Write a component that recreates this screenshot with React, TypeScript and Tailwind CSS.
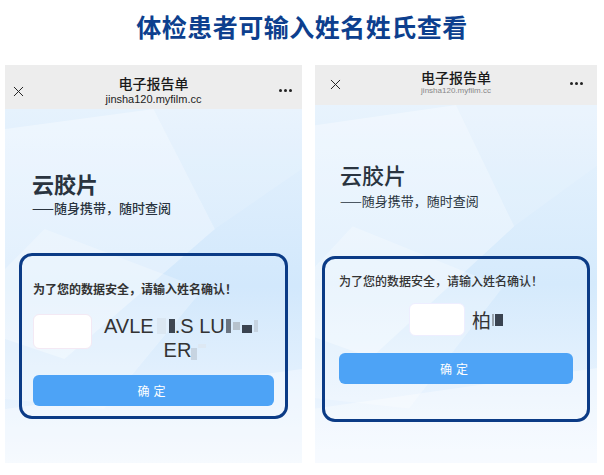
import { X } from "lucide-react";

const font = { fontFamily: '"Noto Sans CJK SC", "Noto Sans", sans-serif' };

function Decor() {
  return (
    <svg className="absolute inset-0 h-full w-full" viewBox="0 0 300 354" preserveAspectRatio="none">
      <polygon points="0,20 150,0 212,120 60,250 0,230" fill="#ffffff" fillOpacity="0.35" />
      <polygon points="0,160 40,120 200,180 100,300 0,290" fill="#ffffff" fillOpacity="0.25" />
      <polygon points="150,0 300,0 300,60 212,120" fill="#ffffff" fillOpacity="0.12" />
      <polygon points="0,354 0,300 300,260 300,354" fill="#ffffff" fillOpacity="0.35" />
    </svg>
  );
}

function Header({ big }: { big: boolean }) {
  return (
    <div
      className={
        "relative flex shrink-0 flex-col items-center justify-center bg-[#ededed] " +
        (big ? "h-[44px]" : "h-[40px]")
      }
    >
      <X
        className={"absolute text-[#222] " + (big ? "left-[5px] top-[18px]" : "left-[12px] top-[11px]")}
        size={17}
        strokeWidth={1.4}
      />
      <div className={"text-[14px] font-medium leading-[18px] text-[#1a1a1a] " + (big ? "mt-[6px]" : "mt-[-6px]")}>
        电子报告单
      </div>
      <div
        className={
          big ? "text-[11px] leading-[14px] text-[#222]" : "text-[8px] leading-[10px] text-[#888]"
        }
        style={{ fontFamily: '"Liberation Sans", "Noto Sans", sans-serif' }}
      >
        jinsha120.myfilm.cc
      </div>
      <div className={"absolute flex gap-[2px] " + (big ? "right-[10px] top-[24px]" : "right-[14px] top-[17px]")}>
        <span className="h-[3px] w-[3px] rounded-full bg-[#222]" />
        <span className="h-[3px] w-[3px] rounded-full bg-[#222]" />
        <span className="h-[3px] w-[3px] rounded-full bg-[#222]" />
      </div>
    </div>
  );
}

function LeftPhone() {
  return (
    <div className="flex h-[398px] w-[297px] flex-col overflow-hidden">
      <Header big />
      <div className="relative flex-1 bg-gradient-to-b from-[#e6f2fd] via-[#d2e8fc] to-[#f1f7fe]">
        <Decor />
        <div className="relative px-[27px] pt-[60px]">
          <div className="text-[22px] font-bold leading-[28px] text-[#2a3440]">云胶片</div>
          <div className="mt-[2px] text-[13px] font-medium leading-[18px] text-[#2a3440]">——随身携带，随时查阅</div>
        </div>
        <div className="relative mx-[14px] mt-[36px] h-[166px] rounded-[13px] border-[3px] border-[#0b3b86] px-[11px] pt-[25px]">
          <div className="text-[12px] font-bold leading-[16px] text-[#333]">为了您的数据安全，请输入姓名确认！</div>
          <div className="mt-[17px] flex items-start">
            <div className="h-[35px] w-[59px] shrink-0 rounded-[6px] border border-[#f3e9f4] bg-white" />
            <div
              className="ml-[12px] flex-1 text-center text-[20px] leading-[24px] text-[#333]"
              style={{ fontFamily: '"Liberation Sans", sans-serif' }}
            >
              <div className="flex items-center justify-start">
                AVLE
                <span className="mx-[3px] inline-block h-[16px] w-[9px] bg-[#dbe7f2]" />
                <span className="inline-block h-[14px] w-[6px] bg-[#3d4652]" />
                .S LU
                <span className="ml-[1px] inline-block h-[14px] w-[5px] bg-[#6b7480]" />
                <span className="mx-[2px] inline-block h-[8px] w-[7px] bg-[#b7c2cd]" />
                <span className="mt-[6px] inline-block h-[8px] w-[10px] bg-[#3a4350]" />
                <span className="ml-[2px] inline-block h-[12px] w-[4px] bg-[#c6d3e0]" />
              </div>
              <div className="flex items-center justify-center pr-[8px]">
                ER
                <span className="mt-[8px] inline-block h-[12px] w-[6px] bg-[#c7d4e1]" />
                <span className="mb-[8px] ml-[1px] inline-block h-[4px] w-[8px] bg-[#dde8f3]" />
              </div>
            </div>
          </div>
          <div className="mt-[13px] flex h-[31px] items-center justify-center rounded-[6px] bg-[#4da3f6] text-[12px] tracking-[4px] text-white">
            确定
          </div>
        </div>
      </div>
    </div>
  );
}

function RightPhone() {
  return (
    <div className="flex h-[398px] w-[282px] flex-col overflow-hidden">
      <Header big={false} />
      <div className="relative flex-1 bg-gradient-to-b from-[#e8f3fd] via-[#d5eafc] to-[#f3f8ff]">
        <Decor />
        <div className="relative px-[25px] pt-[55px]">
          <div className="text-[22px] font-medium leading-[28px] text-[#2a3440]">云胶片</div>
          <div className="mt-[4px] text-[13px] leading-[18px] text-[#2a3440]">——随身携带，随时查阅</div>
        </div>
        <div className="relative mx-[7px] mt-[46px] h-[166px] rounded-[13px] border-[3px] border-[#0b3b86] px-[14px] pt-[14px]">
          <div className="text-[12px] font-medium leading-[16px] text-[#333]">为了您的数据安全，请输入姓名确认！</div>
          <div className="mt-[14px] flex items-center justify-center">
            <div className="h-[33px] w-[56px] rounded-[6px] border border-[#eef] bg-white" />
            <div className="ml-[7px] flex items-center text-[19px] leading-[22px] text-[#333]">
              柏
              <span className="ml-[1px] inline-block h-[12px] w-[2px] bg-[#9aa4ae]" />
              <span className="ml-[1px] inline-block h-[12px] w-[8px] bg-[#3a4350]" />
            </div>
          </div>
          <div className="mt-[17px] flex h-[31px] items-center justify-center rounded-[6px] bg-[#4da3f6] text-[12px] tracking-[4px] text-white">
            确定
          </div>
        </div>
      </div>
    </div>
  );
}

export default function App() {
  return (
    <div className="h-[475px] w-[604px] bg-white" style={font}>
      <div className="flex h-[65px] justify-center pt-[9px]">
        <div className="text-[25px] font-bold leading-[34px] tracking-[0.5px] text-[#0d3f8e]">体检患者可输入姓名姓氏查看</div>
      </div>
      <div className="flex pl-[5px]">
        <LeftPhone />
        <div className="w-[13px]" />
        <RightPhone />
      </div>
    </div>
  );
}
